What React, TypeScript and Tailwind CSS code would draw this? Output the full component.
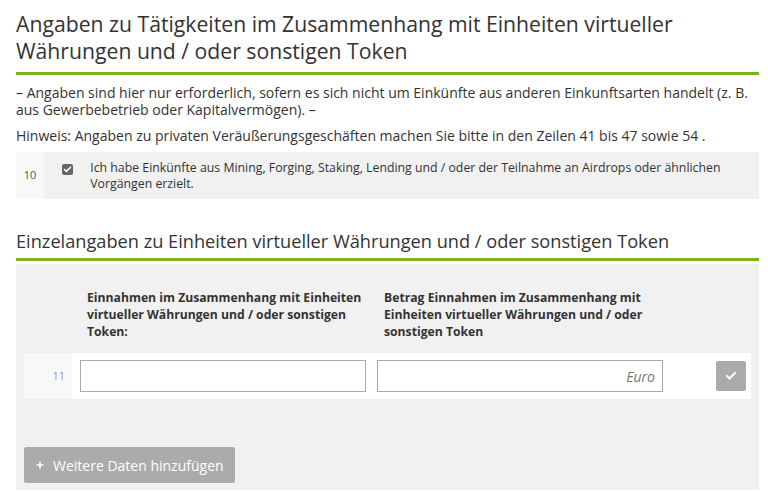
import { Check, Plus } from "lucide-react";

export default function App() {
  return (
    <div className="min-h-[492px] bg-white pl-4 pr-[9px] pt-[10px] text-[#333] [font-family:'Open_Sans',sans-serif]">
      <h1 className="text-[21.2px] leading-[27px] font-normal">
        Angaben zu Tätigkeiten im Zusammenhang mit Einheiten virtueller Währungen und / oder sonstigen Token
      </h1>
      <div className="mt-[8px] h-[3px] bg-[#7ab51d]" />

      <p className="mt-[9px] text-[14px] leading-[17px]">
        – Angaben sind hier nur erforderlich, sofern es sich nicht um Einkünfte aus anderen Einkunftsarten handelt (z. B.
        aus Gewerbebetrieb oder Kapitalvermögen). –
      </p>
      <p className="mt-[9px] text-[14px] leading-[17px]">
        Hinweis: Angaben zu privaten Veräußerungsgeschäften machen Sie bitte in den Zeilen 41 bis 47 sowie 54 .
      </p>

      <div className="mt-[8px] flex h-[47px] bg-[#f1f1f1]">
        <div className="flex w-8 items-center justify-center bg-[#f8f8f8] text-[11px] text-[#555]">10</div>
        <div className="flex items-center pl-[18px]">
          <span className="mt-[12px] flex h-[11px] w-[11px] shrink-0 items-center justify-center self-start rounded-[2px] bg-[#666]">
            <Check className="h-[9px] w-[9px] text-white" strokeWidth={4} />
          </span>
          <p className="ml-[17px] pr-6 text-[12.3px] leading-[16px]">
            Ich habe Einkünfte aus Mining, Forging, Staking, Lending und / oder der Teilnahme an Airdrops oder ähnlichen
            Vorgängen erzielt.
          </p>
        </div>
      </div>

      <h2 className="mt-[30px] text-[18.2px] leading-[24px] font-normal">
        Einzelangaben zu Einheiten virtueller Währungen und / oder sonstigen Token
      </h2>
      <div className="mt-[5px] h-[3px] bg-[#7ab51d]" />

      <div className="mt-[3px] bg-[#f1f1f1] px-2 pb-[7px] pt-[25px]">
        <div className="grid grid-cols-[286px_286px] gap-x-[11px] pl-[63px] text-[12.2px] font-bold leading-[17px]">
          <p>Einnahmen im Zusammenhang mit Einheiten virtueller Währungen und / oder sonstigen Token:</p>
          <p className="pr-2">Betrag Einnahmen im Zusammenhang mit Einheiten virtueller Währungen und / oder sonstigen Token</p>
        </div>

        <div className="mt-[13px] flex h-[46px] items-center bg-white">
          <div className="flex h-full w-12 items-center justify-end bg-[#f8f8f8] pr-[7px] text-[11px] text-[#999]">11</div>
          <input
            className="ml-2 h-[32px] w-[286px] border border-[#aaa] bg-white outline-none"
            aria-label="Einnahmen"
          />
          <div className="ml-[11px] flex h-[32px] w-[286px] items-center justify-end border border-[#aaa] pr-[7px] text-[14px] italic text-[#777]">
            Euro
          </div>
          <button className="ml-[53px] flex h-[30px] w-[30px] items-center justify-center rounded-[2px] bg-[#ababab]">
            <Check className="h-[12px] w-[12px] text-white" strokeWidth={4} />
          </button>
        </div>

        <button className="mt-[48px] flex h-[36px] items-center gap-[8px] rounded-[2px] bg-[#ababab] px-[11px] text-[14px] text-white">
          <Plus className="h-[10px] w-[10px]" strokeWidth={4} />
          Weitere Daten hinzufügen
        </button>
      </div>
    </div>
  );
}
